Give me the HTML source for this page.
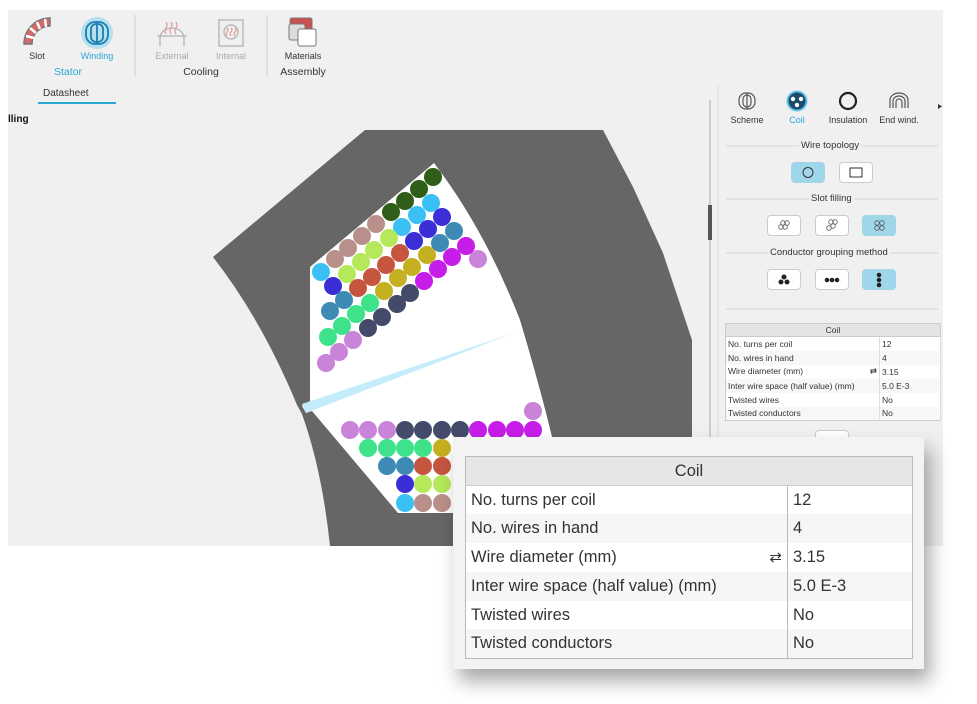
<!DOCTYPE html>
<html><head><meta charset="utf-8"><style>
*{margin:0;padding:0;box-sizing:border-box}
body{width:977px;height:704px;background:#fff;position:relative;overflow:hidden;font-family:"Liberation Sans",Arial,sans-serif;color:#333}
.a{position:absolute;white-space:nowrap}
.s9{font-size:9px}
.c{text-align:center}
.st{position:absolute;font-size:9.5px;color:#333;background:#f0f0f0;padding:0 2px}
.btn{position:absolute;width:34px;height:21px;border:1px solid #ccc;border-radius:4px;background:#fff}
.btn.on{background:#9fd6ea;border-color:#9fd6ea}
table{border-collapse:collapse}
.small{position:absolute;left:725px;top:323px;width:216px;font-size:8.5px;border:1px solid #ccc}
.small td{height:14px;padding:0 2px;border-right:1px solid #ddd;background:#fff}
.small tr:nth-child(odd) td{background:#f7f7f7}
.small th{height:13px;background:#e4e4e4;font-weight:normal;border-bottom:1px solid #ccc}
.pop{position:absolute;left:453px;top:437px;width:471px;height:232px;background:#f3f3f3;box-shadow:6px 12px 18px rgba(0,0,0,.35)}
.big{position:absolute;left:12px;top:19px;width:448px;font-size:16.5px;border:1px solid #bbb;color:#333}
.big th{height:29px;background:#e6e6e6;font-weight:normal;border-bottom:1px solid #ccc}
.big td{height:28.8px;padding:0 5px;background:#fff}
.big tr:nth-child(odd) td{background:#f6f6f6}
.big td:first-child{border-right:1px solid #bbb;width:322px}
</style></head><body>
<div class="a" style="left:8px;top:10px;width:935px;height:536px;background:#f0f0f0"></div>
<svg class="a" style="left:0;top:0" width="977" height="704" viewBox="0 0 977 704">
<g transform="translate(22,18)">
<path d="M2 26 A26 26 0 0 1 28 0 L28 8 A18 18 0 0 0 10 26 Z" fill="#d46a6a" stroke="#777" stroke-width="1.5"/>
<path d="M4 18 L12 20 M8 10 L14 15 M15 4 L18 11 M23 1 L24 9" stroke="#fff" stroke-width="2.5"/>
</g>
<circle cx="97" cy="33" r="16" fill="#8fd3ee" opacity=".6"/>
<g fill="none" stroke="#1a7fb0" stroke-width="1.8"><rect x="86" y="22" width="22" height="22" rx="9"/><rect x="91" y="24" width="12" height="18" rx="5"/><line x1="97" y1="22" x2="97" y2="44"/></g>
<g fill="none" stroke="#bbb" stroke-width="1.5"><path d="M160 46 V38 A12 10 0 0 1 184 38 V46"/><path d="M157 36 H187"/><rect x="219" y="20" width="24" height="26"/><circle cx="231" cy="32" r="7"/></g>
<g fill="none" stroke="#e09a9a" stroke-width="1.2"><path d="M166 22 q2 3 0 6 q-2 3 0 6 M171 22 q2 3 0 6 q-2 3 0 6 M176 22 q2 3 0 6 q-2 3 0 6"/><path d="M227 28 q2 2 0 4 q-2 2 0 4 M231 28 q2 2 0 4 q-2 2 0 4 M235 28 q2 2 0 4 q-2 2 0 4"/></g>
<rect x="290" y="18" width="22" height="20" rx="2" fill="#c85050" stroke="#777"/>
<rect x="289" y="24" width="16" height="16" rx="2" fill="#ddd" stroke="#777"/>
<rect x="298" y="29" width="18" height="17" rx="2" fill="#fff" stroke="#777"/>
<line x1="135" y1="15" x2="135" y2="76" stroke="#ccc"/><line x1="267" y1="15" x2="267" y2="76" stroke="#ccc"/>
<line x1="38" y1="103" x2="116" y2="103" stroke="#29a8d8" stroke-width="2"/>
<path d="M365 130 L603 130 L633 187 L663 253 L692 340 L692 546 L330 546 Q322 470 302 414 L297 405 Q262 320 213 257 Z" fill="#666"/>
<path d="M434 163 L310 267 L310 401 L302 406 L306 413 L312 411 L398 513 L552 513 L552 437 Q540 387 520 320 Q485 230 434 163 Z" fill="#fff"/>
<path d="M302 404 L514 333 L306 413 Z" fill="#c5ecfb"/>
<g>
<circle cx="433" cy="177" r="9" fill="#2f5e18"/><circle cx="419" cy="189" r="9" fill="#2f5e18"/><circle cx="405" cy="201" r="9" fill="#2f5e18"/><circle cx="391" cy="212" r="9" fill="#2f5e18"/>
<circle cx="431" cy="203" r="9" fill="#3bc0f5"/><circle cx="417" cy="215" r="9" fill="#3bc0f5"/><circle cx="402" cy="227" r="9" fill="#3bc0f5"/>
<circle cx="442" cy="217" r="9" fill="#3c2ed6"/><circle cx="428" cy="229" r="9" fill="#3c2ed6"/><circle cx="414" cy="241" r="9" fill="#3c2ed6"/>
<circle cx="454" cy="231" r="9" fill="#3d8ab5"/><circle cx="440" cy="243" r="9" fill="#3d8ab5"/>
<circle cx="466" cy="246" r="9" fill="#c61de8"/><circle cx="452" cy="257" r="9" fill="#c61de8"/><circle cx="438" cy="269" r="9" fill="#c61de8"/><circle cx="424" cy="281" r="9" fill="#c61de8"/>
<circle cx="478" cy="259" r="9" fill="#c983d8"/>
<circle cx="376" cy="224" r="9" fill="#b98f89"/><circle cx="362" cy="236" r="9" fill="#b98f89"/><circle cx="348" cy="248" r="9" fill="#b98f89"/><circle cx="335" cy="259" r="9" fill="#b98f89"/>
<circle cx="389" cy="238" r="9" fill="#b5e85a"/><circle cx="374" cy="250" r="9" fill="#b5e85a"/><circle cx="361" cy="262" r="9" fill="#b5e85a"/><circle cx="347" cy="274" r="9" fill="#b5e85a"/>
<circle cx="321" cy="272" r="9" fill="#3bc0f5"/>
<circle cx="400" cy="253" r="9" fill="#c65540"/><circle cx="386" cy="265" r="9" fill="#c65540"/><circle cx="372" cy="277" r="9" fill="#c65540"/><circle cx="358" cy="288" r="9" fill="#c65540"/>
<circle cx="427" cy="255" r="9" fill="#c4b020"/><circle cx="412" cy="267" r="9" fill="#c4b020"/><circle cx="398" cy="278" r="9" fill="#c4b020"/><circle cx="384" cy="291" r="9" fill="#c4b020"/>
<circle cx="333" cy="286" r="9" fill="#3c2ed6"/>
<circle cx="344" cy="300" r="9" fill="#3d8ab5"/><circle cx="330" cy="311" r="9" fill="#3d8ab5"/>
<circle cx="370" cy="303" r="9" fill="#3ee28a"/><circle cx="356" cy="314" r="9" fill="#3ee28a"/><circle cx="342" cy="326" r="9" fill="#3ee28a"/><circle cx="328" cy="337" r="9" fill="#3ee28a"/>
<circle cx="410" cy="293" r="9" fill="#434a6a"/><circle cx="397" cy="304" r="9" fill="#434a6a"/><circle cx="382" cy="317" r="9" fill="#434a6a"/><circle cx="368" cy="328" r="9" fill="#434a6a"/>
<circle cx="353" cy="340" r="9" fill="#c983d8"/><circle cx="339" cy="352" r="9" fill="#c983d8"/><circle cx="326" cy="363" r="9" fill="#c983d8"/>
<circle cx="533" cy="411" r="9" fill="#c983d8"/>
<circle cx="350" cy="430" r="9" fill="#c983d8"/><circle cx="368" cy="430" r="9" fill="#c983d8"/><circle cx="387" cy="430" r="9" fill="#c983d8"/>
<circle cx="405" cy="430" r="9" fill="#434a6a"/><circle cx="423" cy="430" r="9" fill="#434a6a"/><circle cx="442" cy="430" r="9" fill="#434a6a"/><circle cx="460" cy="430" r="9" fill="#434a6a"/>
<circle cx="478" cy="430" r="9" fill="#c61de8"/><circle cx="497" cy="430" r="9" fill="#c61de8"/><circle cx="515" cy="430" r="9" fill="#c61de8"/><circle cx="533" cy="430" r="9" fill="#c61de8"/>
<circle cx="368" cy="448" r="9" fill="#3ee28a"/><circle cx="387" cy="448" r="9" fill="#3ee28a"/><circle cx="405" cy="448" r="9" fill="#3ee28a"/><circle cx="423" cy="448" r="9" fill="#3ee28a"/><circle cx="442" cy="448" r="9" fill="#c4b020"/>
<circle cx="387" cy="466" r="9" fill="#3d8ab5"/><circle cx="405" cy="466" r="9" fill="#3d8ab5"/><circle cx="423" cy="466" r="9" fill="#c65540"/><circle cx="442" cy="466" r="9" fill="#c65540"/>
<circle cx="405" cy="484" r="9" fill="#3c2ed6"/><circle cx="423" cy="484" r="9" fill="#b5e85a"/><circle cx="442" cy="484" r="9" fill="#b5e85a"/>
<circle cx="405" cy="503" r="9" fill="#3bc0f5"/><circle cx="423" cy="503" r="9" fill="#b98f89"/><circle cx="442" cy="503" r="9" fill="#b98f89"/>
</g>
<line x1="710" y1="100" x2="710" y2="440" stroke="#ccc" stroke-width="2"/>
<rect x="708" y="205" width="4" height="35" fill="#555"/>
<line x1="718" y1="85" x2="718" y2="440" stroke="#ddd"/>
<g fill="none" stroke="#555" stroke-width="1.2"><rect x="739" y="93" width="16" height="16" rx="7"/><rect x="743" y="95" width="8" height="12" rx="4"/><line x1="747" y1="93" x2="747" y2="109"/>
<path d="M890 108 V100 A9 7 0 0 1 908 100 V108 M893 108 V101 A6 5 0 0 1 905 101 V108 M896 108 V102 A3 3 0 0 1 902 102 V108"/></g>
<circle cx="797" cy="101" r="11" fill="#8fd3ee" opacity=".6"/><circle cx="797" cy="101" r="9" fill="#1b4a68" stroke="#3aa6d8" stroke-width="1.5"/>
<circle cx="793" cy="99" r="2.2" fill="#fff"/><circle cx="801" cy="99" r="2.2" fill="#fff"/><circle cx="797" cy="105" r="2.2" fill="#fff"/>
<circle cx="848" cy="101" r="8" fill="none" stroke="#222" stroke-width="2.2"/>
<path d="M938 104 l4 2.5 l-4 2.5z" fill="#333"/>
<g stroke="#d6d6d6"><line x1="726" y1="146" x2="938" y2="146"/><line x1="726" y1="199" x2="938" y2="199"/><line x1="726" y1="253" x2="938" y2="253"/><line x1="726" y1="309" x2="938" y2="309"/></g>
</svg>
<div class="a s9 c" style="left:17px;top:51px;width:40px;color:#333">Slot</div>
<div class="a s9 c" style="left:77px;top:51px;width:40px;color:#29a8d8">Winding</div>
<div class="a s9 c" style="left:152px;top:51px;width:40px;color:#aaa">External</div>
<div class="a s9 c" style="left:211px;top:51px;width:40px;color:#aaa">Internal</div>
<div class="a s9 c" style="left:278px;top:51px;width:50px;color:#333">Materials</div>
<div class="a c" style="left:38px;top:66px;width:60px;font-size:10.5px;color:#29a8d8">Stator</div>
<div class="a c" style="left:171px;top:66px;width:60px;font-size:10.5px">Cooling</div>
<div class="a c" style="left:273px;top:66px;width:60px;font-size:10.5px">Assembly</div>
<div class="a" style="left:43px;top:88px;font-size:10px">Datasheet</div>
<div class="a" style="left:8px;top:114px;font-size:10px;font-weight:bold;color:#111">lling</div>
<div class="a s9 c" style="left:727px;top:115px;width:40px">Scheme</div>
<div class="a s9 c" style="left:777px;top:115px;width:40px;color:#29a8d8">Coil</div>
<div class="a s9 c" style="left:823px;top:115px;width:50px">Insulation</div>
<div class="a s9 c" style="left:874px;top:115px;width:50px">End wind.</div>
<div class="st" style="left:799px;top:140px">Wire topology</div>
<div class="st" style="left:809px;top:193px">Slot filling</div>
<div class="st" style="left:768px;top:247px">Conductor grouping method</div>
<div class="btn on" style="left:791px;top:162px"><svg width="32" height="19"><circle cx="16" cy="9.5" r="5" fill="none" stroke="#333"/></svg></div>
<div class="btn" style="left:839px;top:162px"><svg width="32" height="19"><rect x="10" y="5" width="12" height="9" fill="none" stroke="#333"/></svg></div>
<div class="btn" style="left:767px;top:215px"><svg width="32" height="19" fill="none" stroke="#555" stroke-width=".8"><circle cx="13" cy="11" r="2.3"/><circle cx="17" cy="11" r="2.3"/><circle cx="15" cy="7" r="2.3"/><circle cx="19" cy="7" r="2.3"/></svg></div>
<div class="btn" style="left:815px;top:215px"><svg width="32" height="19" fill="none" stroke="#555" stroke-width=".8"><circle cx="13" cy="12" r="2.3"/><circle cx="17" cy="10" r="2.3"/><circle cx="15" cy="6" r="2.3"/><circle cx="19" cy="6" r="2.3"/></svg></div>
<div class="btn on" style="left:862px;top:215px"><svg width="32" height="19" fill="none" stroke="#555" stroke-width=".8"><circle cx="14" cy="7" r="2.3"/><circle cx="19" cy="7" r="2.3"/><circle cx="14" cy="12" r="2.3"/><circle cx="19" cy="12" r="2.3"/></svg></div>
<div class="btn" style="left:767px;top:269px"><svg width="32" height="19" fill="#222"><circle cx="16" cy="7" r="2.5"/><circle cx="13" cy="12" r="2.5"/><circle cx="19" cy="12" r="2.5"/></svg></div>
<div class="btn" style="left:815px;top:269px"><svg width="32" height="19" fill="#222"><circle cx="11" cy="10" r="2.3"/><circle cx="16" cy="10" r="2.3"/><circle cx="21" cy="10" r="2.3"/></svg></div>
<div class="btn on" style="left:862px;top:269px"><svg width="32" height="19" fill="#222"><circle cx="16" cy="5" r="2.3"/><circle cx="16" cy="10" r="2.3"/><circle cx="16" cy="15" r="2.3"/></svg></div>
<table class="small">
<tr><th colspan="2">Coil</th></tr>
<tr><td style="width:154px">No. turns per coil</td><td>12</td></tr>
<tr><td>No. wires in hand</td><td>4</td></tr>
<tr><td>Wire diameter (mm)<span style="float:right">⇄</span></td><td>3.15</td></tr>
<tr><td>Inter wire space (half value) (mm)</td><td>5.0 E-3</td></tr>
<tr><td>Twisted wires</td><td>No</td></tr>
<tr><td>Twisted conductors</td><td>No</td></tr>
</table>
<div class="btn" style="left:815px;top:430px;height:12px"></div>
<div class="pop">
<table class="big">
<tr><th colspan="2">Coil</th></tr>
<tr><td>No. turns per coil</td><td>12</td></tr>
<tr><td>No. wires in hand</td><td>4</td></tr>
<tr><td>Wire diameter (mm)<span style="float:right;font-size:15px">⇄</span></td><td>3.15</td></tr>
<tr><td>Inter wire space (half value) (mm)</td><td>5.0 E-3</td></tr>
<tr><td>Twisted wires</td><td>No</td></tr>
<tr><td>Twisted conductors</td><td>No</td></tr>
</table>
</div>
</body></html>
